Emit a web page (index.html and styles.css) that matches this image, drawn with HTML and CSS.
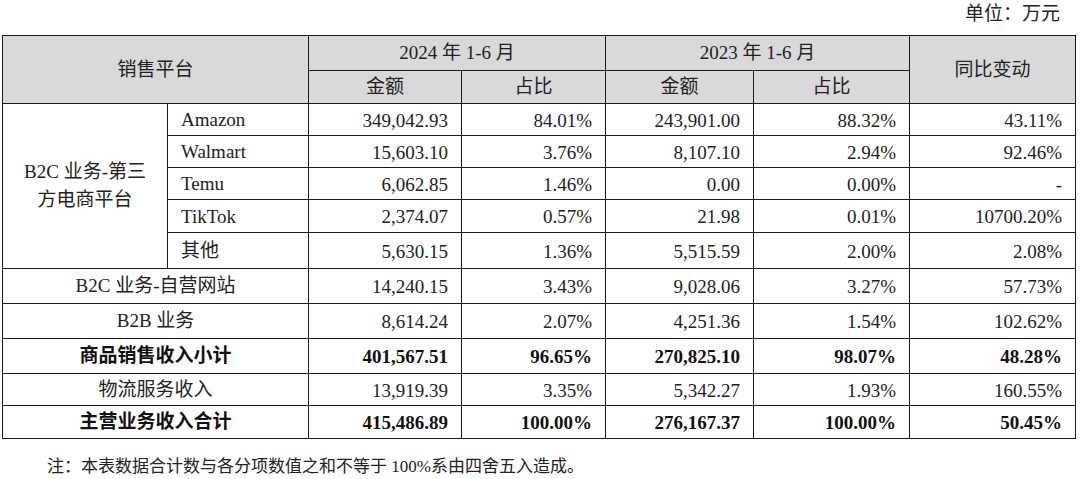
FILE: index.html
```html
<!DOCTYPE html>
<html lang="zh-CN">
<head>
<meta charset="utf-8">
<title>销售平台收入</title>
<link rel="stylesheet" href="styles.css">
</head>
<body>
<div class="page">
  <div class="unit">单位：万元</div>
  <table class="report">
    <colgroup>
      <col class="c1"><col class="c2"><col class="c3"><col class="c4"><col class="c5"><col class="c6"><col class="c7">
    </colgroup>
    <thead>
      <tr class="h-top">
        <th colspan="2" rowspan="2">销售平台</th>
        <th colspan="2">2024 年 1-6 月</th>
        <th colspan="2">2023 年 1-6 月</th>
        <th rowspan="2">同比变动</th>
      </tr>
      <tr class="h-sub">
        <th>金额</th><th>占比</th><th>金额</th><th>占比</th>
      </tr>
    </thead>
    <tbody>
      <tr class="r32">
        <td rowspan="5" class="group">B2C 业务-第三<br>方电商平台</td>
        <td class="name">Amazon</td>
        <td class="num">349,042.93</td><td class="num">84.01%</td>
        <td class="num">243,901.00</td><td class="num">88.32%</td>
        <td class="num">43.11%</td>
      </tr>
      <tr class="r32">
        <td class="name">Walmart</td>
        <td class="num">15,603.10</td><td class="num">3.76%</td>
        <td class="num">8,107.10</td><td class="num">2.94%</td>
        <td class="num">92.46%</td>
      </tr>
      <tr class="r32">
        <td class="name">Temu</td>
        <td class="num">6,062.85</td><td class="num">1.46%</td>
        <td class="num">0.00</td><td class="num">0.00%</td>
        <td class="num">-</td>
      </tr>
      <tr class="r33">
        <td class="name">TikTok</td>
        <td class="num">2,374.07</td><td class="num">0.57%</td>
        <td class="num">21.98</td><td class="num">0.01%</td>
        <td class="num">10700.20%</td>
      </tr>
      <tr class="r36">
        <td class="name">其他</td>
        <td class="num">5,630.15</td><td class="num">1.36%</td>
        <td class="num">5,515.59</td><td class="num">2.00%</td>
        <td class="num">2.08%</td>
      </tr>
      <tr class="r35">
        <td colspan="2" class="label">B2C 业务-自营网站</td>
        <td class="num">14,240.15</td><td class="num">3.43%</td>
        <td class="num">9,028.06</td><td class="num">3.27%</td>
        <td class="num">57.73%</td>
      </tr>
      <tr class="r35">
        <td colspan="2" class="label">B2B 业务</td>
        <td class="num">8,614.24</td><td class="num">2.07%</td>
        <td class="num">4,251.36</td><td class="num">1.54%</td>
        <td class="num">102.62%</td>
      </tr>
      <tr class="r35 total">
        <td colspan="2" class="label">商品销售收入小计</td>
        <td class="num">401,567.51</td><td class="num">96.65%</td>
        <td class="num">270,825.10</td><td class="num">98.07%</td>
        <td class="num">48.28%</td>
      </tr>
      <tr class="r32">
        <td colspan="2" class="label">物流服务收入</td>
        <td class="num">13,919.39</td><td class="num">3.35%</td>
        <td class="num">5,342.27</td><td class="num">1.93%</td>
        <td class="num">160.55%</td>
      </tr>
      <tr class="r33 total">
        <td colspan="2" class="label">主营业务收入合计</td>
        <td class="num">415,486.89</td><td class="num">100.00%</td>
        <td class="num">276,167.37</td><td class="num">100.00%</td>
        <td class="num">50.45%</td>
      </tr>
    </tbody>
  </table>
  <p class="note">注：本表数据合计数与各分项数值之和不等于 100%系由四舍五入造成。</p>
</div>
</body>
</html>
```
FILE: styles.css
```css
html, body {
  margin: 0;
  padding: 0;
  background: #ffffff;
}

.page {
  width: 1080px;
  font-family: "Liberation Serif", "Noto Sans CJK SC", serif;
  color: #222222;
}

.unit {
  height: 35px;
  box-sizing: border-box;
  padding: 3px 20px 0 0;
  text-align: right;
  font-size: 19px;
  line-height: 22px;
}

.report {
  margin-left: 2px;
  width: 1074px;
  table-layout: fixed;
  border-collapse: collapse;
  font-size: 19px;
}

.c1 { width: 165px; }
.c2 { width: 141px; }
.c3 { width: 153px; }
.c4 { width: 144px; }
.c5 { width: 148px; }
.c6 { width: 156px; }
.c7 { width: 166px; }

.report th,
.report td {
  border: 1px solid #1a1a1a;
  padding: 0;
  line-height: 22px;
  vertical-align: middle;
  white-space: nowrap;
}

.report th {
  background: #d9d9d9;
  font-weight: normal;
  text-align: center;
}

.h-top { height: 35px; }
.h-sub { height: 33px; }
.r32 { height: 32px; }
.r33 { height: 33px; }
.r35 { height: 35px; }
.r36 { height: 36px; }

.report .group {
  text-align: center;
  white-space: normal;
  line-height: 28px;
}

.report .name {
  text-align: left;
  padding-left: 13px;
  padding-top: 1px;
}

.report .label {
  text-align: center;
}

.report .num {
  text-align: right;
  padding-right: 13px;
  padding-top: 2px;
}

.total td {
  font-weight: bold;
  color: #111111;
}

.note {
  margin: 16px 0 0 47px;
  font-size: 17px;
  line-height: 24px;
}
```
